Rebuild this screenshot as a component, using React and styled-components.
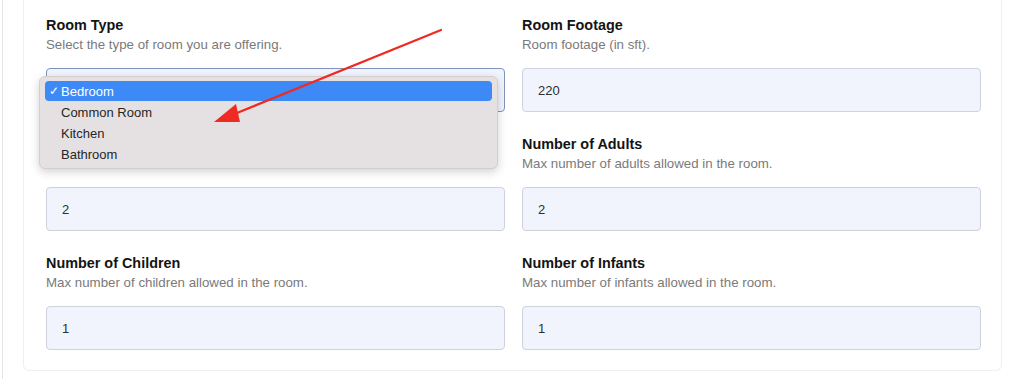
import React from "react";
import styled, { createGlobalStyle } from "styled-components";

const Global = createGlobalStyle`
  html, body { margin: 0; padding: 0; background: #ffffff; }
  body { font-family: "Liberation Sans", Arial, sans-serif; -webkit-font-smoothing: antialiased; }
`;

const Page = styled.div`
  position: relative;
  width: 1024px;
  height: 379px;
  overflow: hidden;
  padding-left: 2px;
  box-sizing: border-box;
`;

const Panel = styled.div`
  height: 100%;
  border-left: 1px solid #e4e4e4;
  padding: 0 22px 0 20px;
  box-sizing: border-box;
`;

const Card = styled.div`
  width: 979px;
  box-sizing: border-box;
  border: 1px solid #efefef;
  border-top: none;
  border-radius: 0 0 6px 6px;
  padding: 16px 20px 20px 22px;
  display: grid;
  grid-template-columns: 1fr 1fr;
  column-gap: 17px;
  row-gap: 23px;
`;

const Field = styled.div`
  position: relative;
  display: flex;
  flex-direction: column;
`;

const Label = styled.div`
  font-size: 14.4px;
  line-height: 18px;
  height: 18px;
  font-weight: 700;
  color: #141414;
`;

const Desc = styled.div`
  margin-top: 3px;
  font-size: 13.3px;
  line-height: 16px;
  height: 16px;
  color: #7a7a7a;
`;

const Input = styled.div`
  margin-top: 15px;
  height: 44px;
  box-sizing: border-box;
  border: 1px solid ${(p) => (p.$focus ? "#7f93bd" : "#cdd2de")};
  background: #f1f4fc;
  border-radius: 4px;
  padding: 0 14px 0 15px;
  display: flex;
  align-items: center;
  font-size: 13px;
  color: #2e2e2e;
`;

const SelectWrap = styled.div`
  position: relative;
  margin-top: 15px;
  & > ${Input} { margin-top: 0; }
`;

const Menu = styled.div`
  position: absolute;
  top: 8px;
  left: -7px;
  right: 7px;
  box-sizing: border-box;
  padding: 4px 5px 3px;
  background: #e5e1e3;
  border: 1px solid #d3cfd1;
  border-radius: 6px;
  box-shadow: 0 3px 10px rgba(0, 0, 0, 0.18);
  display: flex;
  flex-direction: column;
  z-index: 2;
`;

const Option = styled.div`
  height: 21px;
  flex: none;
  display: flex;
  align-items: center;
  border-radius: 4px;
  padding-left: 16px;
  position: relative;
  font-size: 13px;
  color: ${(p) => (p.$active ? "#ffffff" : "#262626")};
  background: ${(p) => (p.$active ? "#3d8af7" : "transparent")};
  ${(p) => p.$active && "height: 20px; margin-bottom: 1px;"}
`;

const Check = styled.span`
  position: absolute;
  left: 4px;
  top: 50%;
  transform: translateY(-52%);
  font-size: 12px;
  color: #ffffff;
`;

const ArrowLayer = styled.svg`
  position: absolute;
  left: 0;
  top: 0;
  pointer-events: none;
  z-index: 5;
`;

const options = ["Bedroom", "Common Room", "Kitchen", "Bathroom"];

function TextField({ label, desc, value }) {
  return (
    <Field>
      <Label>{label}</Label>
      <Desc>{desc}</Desc>
      <Input>{value}</Input>
    </Field>
  );
}

export default function App() {
  return (
    <>
      <Global />
      <Page>
        <Panel>
          <Card>
            <Field>
              <Label>Room Type</Label>
              <Desc>Select the type of room you are offering.</Desc>
              <SelectWrap>
                <Input $focus />
                <Menu>
                  {options.map((o, i) => (
                    <Option key={o} $active={i === 0}>
                      {i === 0 && <Check>✓</Check>}
                      {o}
                    </Option>
                  ))}
                </Menu>
              </SelectWrap>
            </Field>
            <TextField label="Room Footage" desc="Room footage (in sft)." value="220" />
            <TextField label="" desc="" value="2" />
            <TextField label="Number of Adults" desc="Max number of adults allowed in the room." value="2" />
            <TextField label="Number of Children" desc="Max number of children allowed in the room." value="1" />
            <TextField label="Number of Infants" desc="Max number of infants allowed in the room." value="1" />
          </Card>
        </Panel>
        <ArrowLayer width="1024" height="379" viewBox="0 0 1024 379">
          <line x1="441" y1="30" x2="232" y2="115" stroke="#ee2a22" strokeWidth="2.2" strokeLinecap="round" />
          <polygon points="214,122 236,104 240,122" fill="#ee2a22" />
        </ArrowLayer>
      </Page>
    </>
  );
}
